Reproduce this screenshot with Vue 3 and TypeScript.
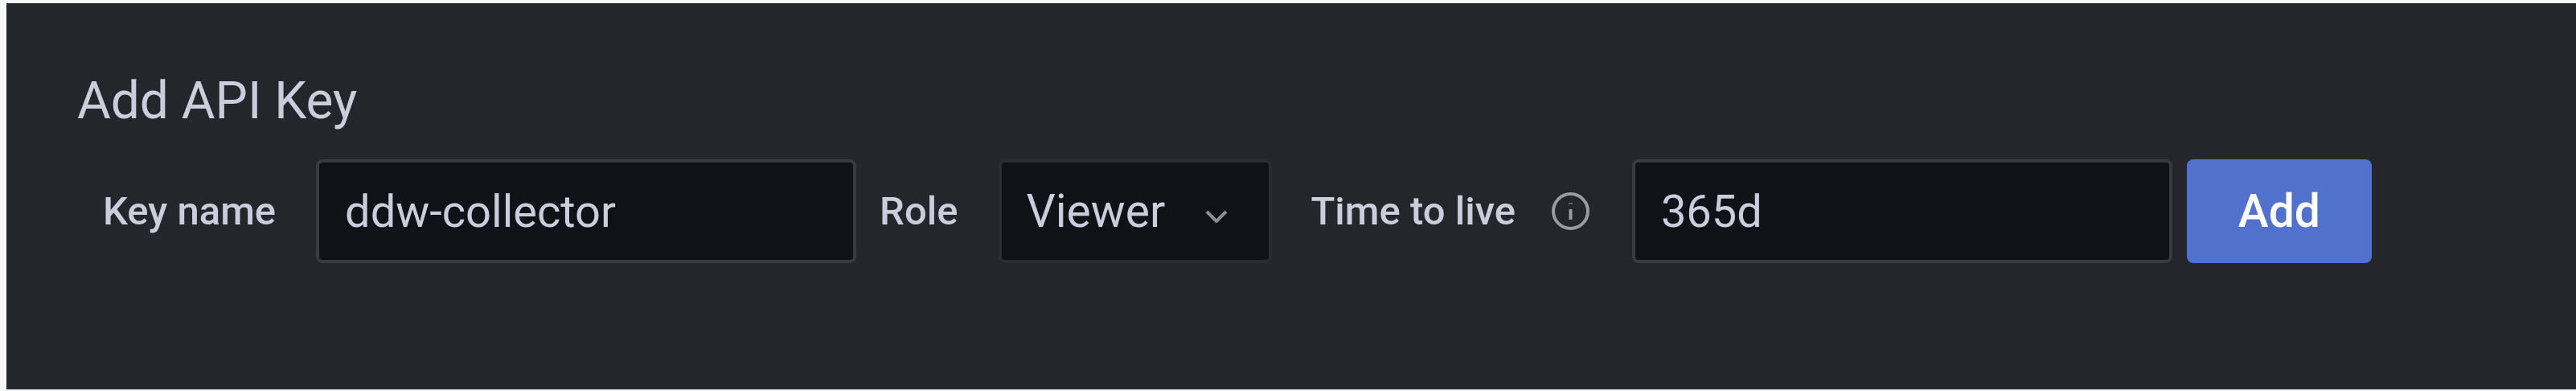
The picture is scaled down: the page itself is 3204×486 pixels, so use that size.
<template>
  <div class="page">
    <section class="panel">
      <h4 class="title">Add API Key</h4>
      <form class="key-form" @submit.prevent>
        <label class="form-label name-label" for="key-name">Key name</label>
        <input id="key-name" v-model="keyName" class="text-input name-input" type="text">

        <span class="form-label role-label">Role</span>
        <div class="role-select">
          <span>{{ role }}</span>
          <svg class="chevron" viewBox="0 0 28 16" fill="none">
            <path d="M2 2l12 12L26 2" />
          </svg>
        </div>

        <label class="form-label ttl-label" for="key-ttl">Time to live</label>
        <svg class="info-icon" viewBox="0 0 47 47" fill="none">
          <circle cx="23.5" cy="23.5" r="21.5" />
          <path d="M23.5 21v13" />
          <path class="dot" d="M23.5 13.5v1" />
        </svg>
        <input id="key-ttl" v-model="ttl" class="text-input ttl-input" type="text">

        <button class="add-btn" type="submit">Add</button>
      </form>
    </section>
  </div>
</template>

<script setup lang="ts">
import { ref } from 'vue'

const keyName = ref('ddw-collector')
const role = ref('Viewer')
const ttl = ref('365d')
</script>

<style>
html,
body {
  margin: 0;
  background: #f7f7f8;
}
</style>

<style scoped>
.page {
  padding: 4px 0 2px 8px;
  font-family: Roboto, "Liberation Sans", sans-serif;
}

.panel {
  box-sizing: border-box;
  height: 480px;
  padding: 81px 0 0 88px;
  background: #24262b;
  color: #ccccdc;
}

.title {
  margin: 0 0 31px;
  font-size: 64px;
  font-weight: 400;
  line-height: 82px;
}

.key-form {
  display: flex;
  align-items: center;
}

.form-label {
  font-size: 49px;
  font-weight: 500;
  white-space: nowrap;
}

.name-label {
  margin: 0 50px 0 32px;
}

.role-label {
  margin: 0 51px 0 29px;
}

.ttl-label {
  margin: 0 45px 0 48px;
}

.text-input {
  box-sizing: border-box;
  height: 129px;
  padding: 0 32px;
  border: 4px solid #3a3b41;
  border-radius: 8px;
  background: #111217;
  color: #ccccdc;
  font-family: inherit;
  font-size: 56px;
  outline: none;
}

.name-input {
  width: 672px;
}

.ttl-input {
  width: 672px;
  margin-left: 53px;
}

.role-select {
  box-sizing: border-box;
  display: flex;
  align-items: center;
  justify-content: space-between;
  width: 340px;
  height: 129px;
  padding: 0 51px 0 30px;
  border: 4px solid #2c2d33;
  border-radius: 8px;
  background: #111217;
  font-size: 57px;
}

.chevron {
  width: 28px;
  height: 16px;
  margin-top: 12px;
}

.chevron path {
  stroke: #8e8e95;
  stroke-width: 4;
}

.info-icon {
  flex: none;
  width: 47px;
  height: 47px;
}

.info-icon circle,
.info-icon path {
  stroke: #9a9aa2;
  stroke-width: 4;
}

.info-icon .dot {
  stroke-width: 5;
}

.add-btn {
  width: 230px;
  height: 129px;
  margin-left: 18px;
  padding: 0;
  border: none;
  border-radius: 8px;
  background: #5171cc;
  color: #ffffff;
  font-family: inherit;
  font-size: 57px;
  font-weight: 500;
}
</style>
